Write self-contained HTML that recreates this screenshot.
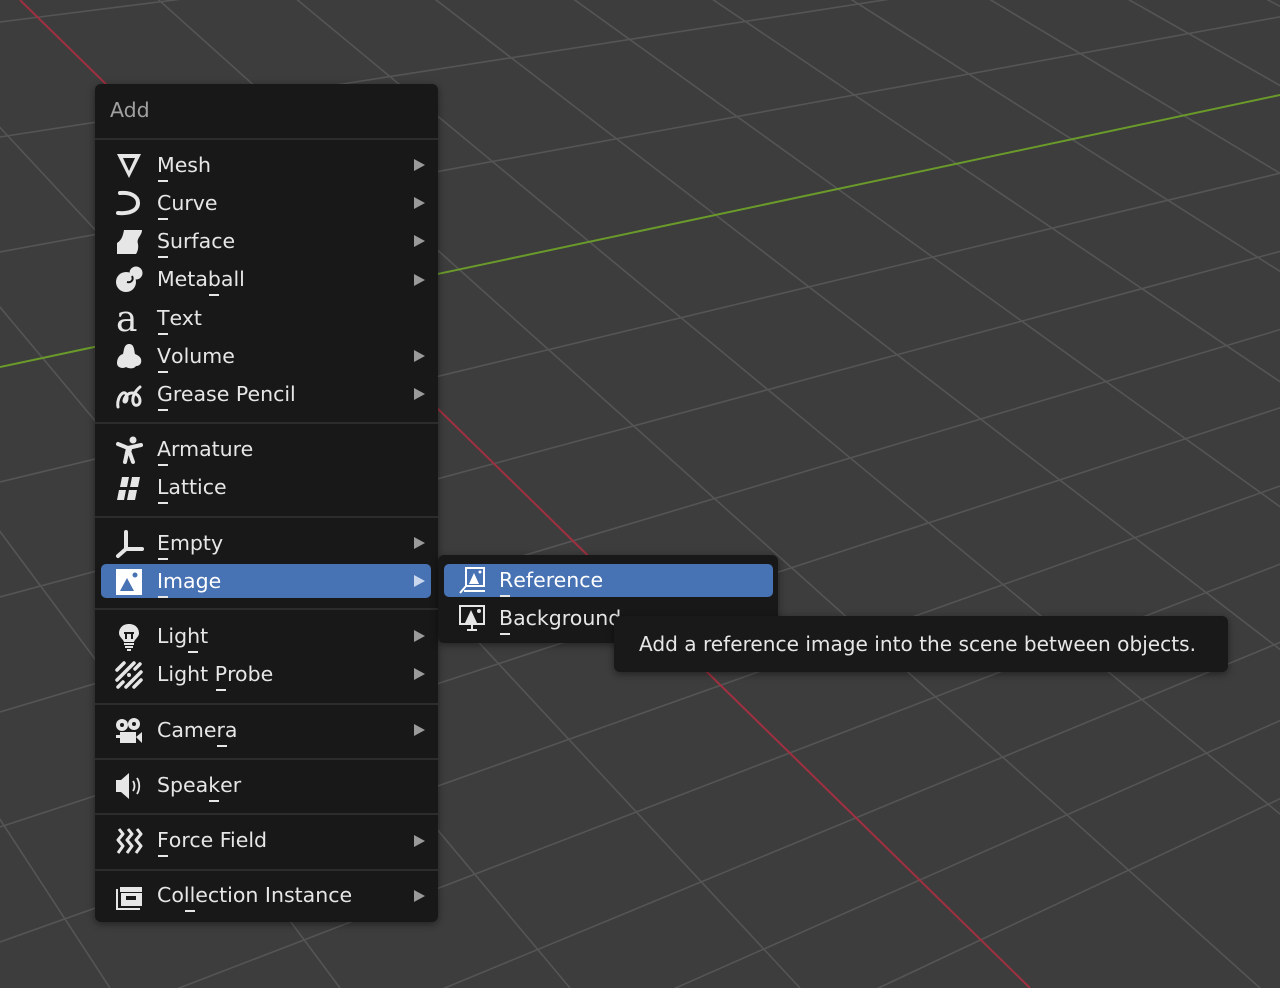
<!DOCTYPE html>
<html><head><meta charset="utf-8"><style>
html,body{margin:0;padding:0;width:1280px;height:988px;overflow:hidden;background:#3d3d3d;font-family:"DejaVu Sans","Liberation Sans",sans-serif;position:relative}
#bg{position:absolute;left:0;top:0;display:block}
.menu{position:absolute;background:#181818;border-radius:6px;box-shadow:0 2px 8px rgba(0,0,0,.45);}
.t{position:absolute;color:#e6e6e6;font-size:20.5px;line-height:24px;white-space:nowrap}
.t u{text-decoration:none;position:relative}
.t u:after{content:"";position:absolute;left:1px;width:10px;bottom:-5px;height:2px;background:#e6e6e6}
.arr{position:absolute;width:0;height:0;border-left:11px solid #9a9a9a;border-top:6px solid transparent;border-bottom:6px solid transparent}
.sep{position:absolute;left:95px;width:343px;height:2px;background:#2c2c2c}
.ic{position:absolute;width:30px;height:30px}
.hl{position:absolute;background:#4772b3;border-radius:5px}
</style></head><body>
<svg id="bg" width="1280" height="988">
<g stroke="#555" stroke-width="1.6" fill="none">
<line x1="-1513" y1="-1500" x2="-350" y2="988"/>
<line x1="-1513" y1="-1500" x2="-120" y2="988"/>
<line x1="-1513" y1="-1500" x2="110" y2="988"/>
<line x1="-1513" y1="-1500" x2="340" y2="988"/>
<line x1="-1513" y1="-1500" x2="570" y2="988"/>
<line x1="-1513" y1="-1500" x2="800" y2="988"/>
<line x1="-1513" y1="-1500" x2="1260" y2="988"/>
<line x1="-1513" y1="-1500" x2="1490" y2="988"/>
<line x1="-1513" y1="-1500" x2="1720" y2="988"/>
<line x1="-1513" y1="-1500" x2="1950" y2="988"/>
<line x1="-1513" y1="-1500" x2="2180" y2="988"/>
<line x1="-1513" y1="-1500" x2="2410" y2="988"/>
<line x1="-1513" y1="-1500" x2="2640" y2="988"/>
<line x1="-1513" y1="-1500" x2="2870" y2="988"/>
<line x1="-1513" y1="-1500" x2="3100" y2="988"/>
<line x1="4000" y1="-483" x2="0" y2="-323"/>
<line x1="4000" y1="-483" x2="0" y2="-208"/>
<line x1="4000" y1="-483" x2="0" y2="-93"/>
<line x1="4000" y1="-483" x2="0" y2="22"/>
<line x1="4000" y1="-483" x2="0" y2="137"/>
<line x1="4000" y1="-483" x2="0" y2="252"/>
<line x1="4000" y1="-483" x2="0" y2="482"/>
<line x1="4000" y1="-483" x2="0" y2="597"/>
<line x1="4000" y1="-483" x2="0" y2="712"/>
<line x1="4000" y1="-483" x2="0" y2="827"/>
<line x1="4000" y1="-483" x2="0" y2="942"/>
<line x1="4000" y1="-483" x2="0" y2="1057"/>
<line x1="4000" y1="-483" x2="0" y2="1172"/>
<line x1="4000" y1="-483" x2="0" y2="1287"/>
<line x1="4000" y1="-483" x2="0" y2="1402"/>
</g>
<line x1="20" y1="0" x2="1030" y2="988" stroke="#a03040" stroke-width="2"/>
<line x1="0" y1="367" x2="1280" y2="95" stroke="#6a9a2a" stroke-width="2"/>
</svg>

<div class="menu" style="left:95px;top:84px;width:343px;height:838px"></div>
<div class="t" style="left:110px;top:98px;color:#a0a0a0">Add</div>
<div class="sep" style="top:138px"></div>
<div class="sep" style="top:422px"></div>
<div class="sep" style="top:516px"></div>
<div class="sep" style="top:608px"></div>
<div class="sep" style="top:703px"></div>
<div class="sep" style="top:758px"></div>
<div class="sep" style="top:813px"></div>
<div class="sep" style="top:869px"></div>
<div class="hl" style="left:101px;top:564px;width:330px;height:34px"></div>

<div class="t" style="left:157px;top:153px"><u>M</u>esh</div>
<div class="t" style="left:157px;top:191px"><u>C</u>urve</div>
<div class="t" style="left:157px;top:229px"><u>S</u>urface</div>
<div class="t" style="left:157px;top:267px">Meta<u>b</u>all</div>
<div class="t" style="left:157px;top:306px"><u>T</u>ext</div>
<div class="t" style="left:157px;top:344px"><u>V</u>olume</div>
<div class="t" style="left:157px;top:382px"><u>G</u>rease Pencil</div>
<div class="t" style="left:157px;top:437px"><u>A</u>rmature</div>
<div class="t" style="left:157px;top:475px"><u>L</u>attice</div>
<div class="t" style="left:157px;top:531px"><u>E</u>mpty</div>
<div class="t" style="left:157px;top:569px;color:#fff"><u>I</u>mage</div>
<div class="t" style="left:157px;top:624px">Lig<u>h</u>t</div>
<div class="t" style="left:157px;top:662px">Light <u>P</u>robe</div>
<div class="t" style="left:157px;top:718px">Came<u>r</u>a</div>
<div class="t" style="left:157px;top:773px">Spea<u>k</u>er</div>
<div class="t" style="left:157px;top:828px"><u>F</u>orce Field</div>
<div class="t" style="left:157px;top:883px">Co<u>l</u>lection Instance</div>

<div class="arr" style="left:414px;top:159px"></div>
<div class="arr" style="left:414px;top:197px"></div>
<div class="arr" style="left:414px;top:235px"></div>
<div class="arr" style="left:414px;top:274px"></div>
<div class="arr" style="left:414px;top:350px"></div>
<div class="arr" style="left:414px;top:388px"></div>
<div class="arr" style="left:414px;top:537px"></div>
<div class="arr" style="left:414px;top:575px;border-left-color:#c8d6ee"></div>
<div class="arr" style="left:414px;top:630px"></div>
<div class="arr" style="left:414px;top:668px"></div>
<div class="arr" style="left:414px;top:724px"></div>
<div class="arr" style="left:414px;top:835px"></div>
<div class="arr" style="left:414px;top:890px"></div>

<svg class="ic" style="left:114px;top:150px" viewBox="0 0 30 30"><path d="M3 4H27L15 28Z M9 8L15 21L21 8Z" fill="#e6e6e6" fill-rule="evenodd"/></svg>
<svg class="ic" style="left:114px;top:188px" viewBox="0 0 30 30"><path d="M6 5C16 4 24 8 24 15C24 23 14 26 4 25" fill="none" stroke="#e6e6e6" stroke-width="4" stroke-linecap="round"/></svg>
<svg class="ic" style="left:114px;top:226px" viewBox="0 0 30 30"><path d="M10 4H28C28 10 22 12 24 18C25 24 22 28 22 28H3V17C8 14 9 9 10 4Z" fill="#e6e6e6"/></svg>
<svg class="ic" style="left:114px;top:264px" viewBox="0 0 30 30"><circle cx="12" cy="18" r="10" fill="#e6e6e6"/><circle cx="22" cy="9" r="6.5" fill="#e6e6e6"/><path d="M13 18C17 19 20 16 18 12" stroke="#181818" stroke-width="2" fill="none"/></svg>
<svg class="ic" style="left:114px;top:303px" viewBox="0 0 30 30"><text x="2" y="28" font-family="DejaVu Serif,serif" font-size="36" fill="#e6e6e6">a</text></svg>
<svg class="ic" style="left:114px;top:341px" viewBox="0 0 30 30"><path d="M15 3C10 3 10 9 9 13C5 14 3 18 3 22C3 27 9 28 12 26C15 28 20 28 22 25C26 25 28 22 27 18C26 15 23 14 21 13C20 8 20 3 15 3Z" fill="#e6e6e6"/></svg>
<svg class="ic" style="left:114px;top:380px" viewBox="0 0 30 30"><path d="M4 27C3 22 5 15 9 13C14 11 14 22 11 22C8 22 12 13 18 13C22 13 26 16 26 21C26 26 20 27 19 22C18 17 21 11 26 7" fill="none" stroke="#e6e6e6" stroke-width="3" stroke-linecap="round"/></svg>
<svg class="ic" style="left:114px;top:435px" viewBox="0 0 30 30"><circle cx="19" cy="5" r="3.5" fill="#e6e6e6"/><path d="M4 9L14 13L11 27M14 13L19 27M14 13L27 10M16 14L15 18" fill="none" stroke="#e6e6e6" stroke-width="4" stroke-linecap="round"/></svg>
<svg class="ic" style="left:114px;top:473px" viewBox="0 0 30 30"><path d="M8 4H15L13 14H6Z M18 4H26L24 14H16Z M5 17H12L10 27H3Z M15 17H23L21 27H13Z" fill="#e6e6e6"/></svg>
<svg class="ic" style="left:114px;top:529px" viewBox="0 0 30 30"><path d="M12 3V20L4 27M12 20H28" fill="none" stroke="#e6e6e6" stroke-width="4" stroke-linecap="round"/></svg>
<svg class="ic" style="left:114px;top:567px" viewBox="0 0 30 30"><rect x="2" y="2" width="26" height="26" fill="#fff"/><path d="M6 24L13 11L20 24Z" fill="#4772b3"/><circle cx="21" cy="8" r="2.5" fill="#4772b3"/></svg>
<svg class="ic" style="left:114px;top:622px" viewBox="0 0 30 30"><path d="M15 2C8 2 5 7 5 11C5 15 9 17 10 20H20C21 17 25 15 25 11C25 7 22 2 15 2Z" fill="#e6e6e6"/><path d="M10 11H20M12 11V17M18 11V17" stroke="#181818" stroke-width="2"/><path d="M10 22H20M11 25H19M13 28H17" stroke="#e6e6e6" stroke-width="2"/></svg>
<svg class="ic" style="left:114px;top:660px" viewBox="0 0 30 30"><path d="M3 10L10 3M3 20L20 3M12 27L27 12M20 27L27 20M4 27L9 22M21 9L26 4" stroke="#e6e6e6" stroke-width="3.5" stroke-linecap="round"/><circle cx="15" cy="15" r="2" fill="#e6e6e6"/></svg>
<svg class="ic" style="left:114px;top:716px" viewBox="0 0 30 30"><circle cx="8" cy="9" r="6" fill="#e6e6e6"/><circle cx="20" cy="8" r="6" fill="#e6e6e6"/><circle cx="8" cy="9" r="2" fill="#181818"/><circle cx="20" cy="8" r="2" fill="#181818"/><rect x="6" y="16" width="16" height="11" fill="#e6e6e6"/><path d="M22 21L28 16V27Z M2 19H6V22H2Z" fill="#e6e6e6"/></svg>
<svg class="ic" style="left:114px;top:771px" viewBox="0 0 30 30"><path d="M2 9H7L15 2V28L7 21H2Z" fill="#e6e6e6"/><path d="M19 10C21 13 21 17 19 20M23 7C26 12 26 18 23 23" fill="none" stroke="#e6e6e6" stroke-width="1.8"/></svg>
<svg class="ic" style="left:114px;top:826px" viewBox="0 0 30 30"><path d="M5 3L9 8L4 14L9 20L4 27M14 3L18 8L13 14L18 20L13 27M23 3L27 8L22 14L27 20L22 27" fill="none" stroke="#e6e6e6" stroke-width="3" stroke-linejoin="round"/></svg>
<svg class="ic" style="left:114px;top:881px" viewBox="0 0 30 30"><rect x="6" y="6" width="22" height="5" fill="#e6e6e6"/><rect x="7" y="12" width="21" height="13" fill="#e6e6e6"/><rect x="12" y="15" width="10" height="4" fill="#181818"/><path d="M3 8V28H26" fill="none" stroke="#e6e6e6" stroke-width="2"/></svg>

<div class="menu" style="left:438px;top:555px;width:340px;height:88px"></div>
<div class="hl" style="left:444px;top:564px;width:329px;height:33px"></div>
<svg class="ic" style="left:457px;top:565px" viewBox="0 0 30 30"><rect x="9" y="3" width="18" height="18" fill="none" stroke="#fff" stroke-width="2"/><path d="M12 19L17 8L22 19Z" fill="#fff"/><circle cx="23" cy="7" r="1.5" fill="#fff"/><path d="M9 21L3 28M7 26H28" stroke="#fff" stroke-width="2"/></svg>
<svg class="ic" style="left:457px;top:603px" viewBox="0 0 30 30"><rect x="3" y="3" width="24" height="18" fill="none" stroke="#e6e6e6" stroke-width="2"/><path d="M8 20L14 7L20 20Z" fill="#e6e6e6"/><circle cx="22" cy="8" r="2" fill="#e6e6e6"/><path d="M15 21V27M10 27H20" stroke="#e6e6e6" stroke-width="2"/></svg>
<div class="t" style="left:499px;top:568px;color:#fff"><u>R</u>eference</div>
<div class="t" style="left:499px;top:606px"><u>B</u>ackground</div>

<div class="menu" style="left:614px;top:616px;width:614px;height:56px;background:#191919"></div>
<div class="t" style="left:639px;top:632px;font-size:20.1px">Add a reference image into the scene between objects.</div>
</body></html>
